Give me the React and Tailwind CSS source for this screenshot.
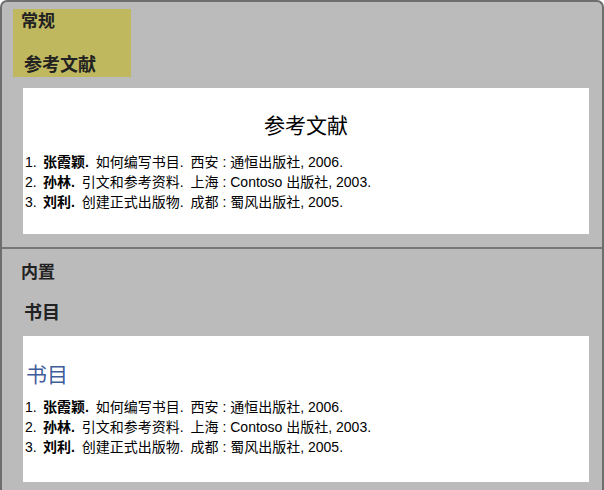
const refs = [
  { n: "1.", author: "张霞颖.", title: "如何编写书目.", pub: "西安 : 通恒出版社, 2006." },
  { n: "2.", author: "孙林.", title: "引文和参考资料.", pub: "上海 : Contoso 出版社, 2003." },
  { n: "3.", author: "刘利.", title: "创建正式出版物.", pub: "成都 : 蜀风出版社, 2005." },
];

const font = "font-['Liberation_Sans','Noto_Sans_CJK_SC',sans-serif]";

function RefList() {
  return (
    <ol className="text-[14px] leading-[20px] text-black">
      {refs.map((r) => (
        <li key={r.n} className="flex whitespace-pre">
          <span className="w-[18px]">{r.n}</span>
          <span className="font-bold mr-[3px]">{r.author}</span>
          <span className="mr-[3px]"> {r.title}</span>
          <span> {r.pub}</span>
        </li>
      ))}
    </ol>
  );
}

export default function App() {
  return (
    <div
      className={`w-[604px] h-[490px] bg-[#bbbbbb] border-2 border-b-0 border-[#6e6e6e] rounded-t-[7px] overflow-hidden ${font}`}
    >
      <div className="ml-[11px] mt-[7px] w-[118px] h-[68px] bg-[#bfb85f] text-[#222] font-bold leading-[20px] pt-[3px]">
        <div className="pl-[8px] text-[17px]">常规</div>
        <div className="pl-[11px] mt-[23px] text-[18px]">参考文献</div>
      </div>

      <div className="ml-[21px] mt-[11px] w-[566px] h-[146px] bg-white pl-[2px] pt-[25px]">
        <div className="text-center text-[21px] leading-[26px] text-black pr-[2px]">参考文献</div>
        <div className="mt-[13px]">
          <RefList />
        </div>
      </div>

      <div className="mt-[13px] h-[2px] bg-[#777777]" />

      <div className="pl-[19px] mt-[14px] text-[#222] font-bold text-[17px] leading-[20px]">内置</div>
      <div className="pl-[22px] mt-[20px] text-[#222] font-bold text-[18px] leading-[20px]">书目</div>

      <div className="ml-[21px] mt-[13px] w-[566px] h-[146px] bg-white pl-[2px] pt-[26px]">
        <div className="text-[21px] leading-[26px] text-[#3f5d9a] pl-[1px]">书目</div>
        <div className="mt-[9px]">
          <RefList />
        </div>
      </div>
    </div>
  );
}
